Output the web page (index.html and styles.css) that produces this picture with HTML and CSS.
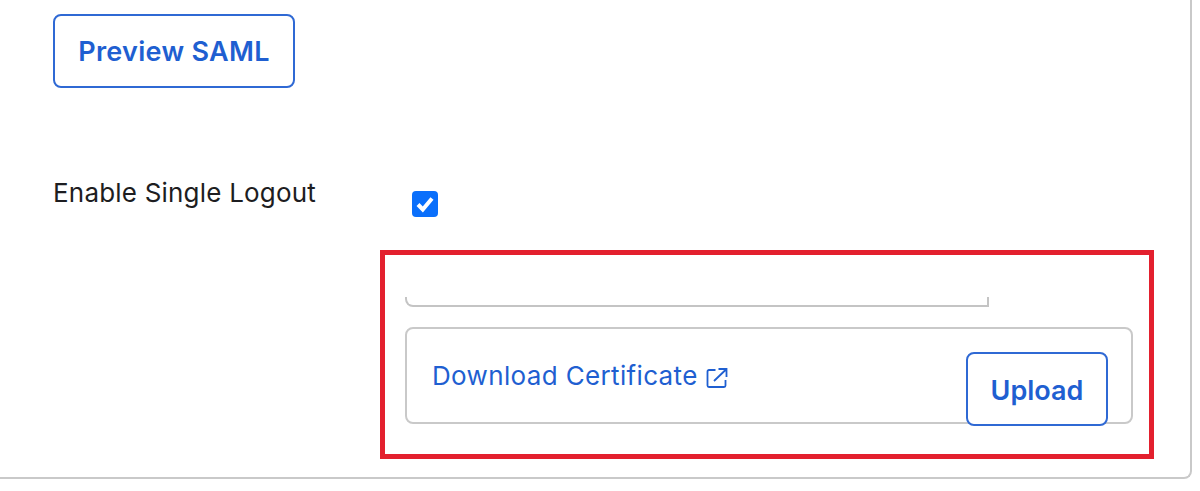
FILE: index.html
```html
<!DOCTYPE html>
<html lang="en">
<head>
    <meta charset="UTF-8">
    <meta name="viewport" content="width=device-width, initial-scale=1.0">
    <title>SAML Settings</title>
    <link rel="stylesheet" href="styles.css">
</head>
<body>
    <div class="settings-card">
        <button class="outline-btn preview-btn">Preview SAML</button>

        <div class="logout-row">
            <span class="field-label">Enable Single Logout</span>
            <span class="check-box">
                <svg width="26" height="26" viewBox="0 0 26 26">
                    <rect width="26" height="26" rx="4" fill="#0a6ffb"/>
                    <path d="M6 13.5l4.8 5L20 7.5" fill="none" stroke="#fff" stroke-width="4"/>
                </svg>
            </span>
        </div>

        <div class="highlight-box">
            <div class="input-end"></div>
            <div class="cert-box">
                <a href="#" class="cert-link">
                    Download Certificate
                    <svg class="link-icon" width="22" height="22" viewBox="0 0 22 22" fill="none" stroke="#1f5fd1" stroke-width="1.8">
                        <path d="M9.5 3H3a1.5 1.5 0 0 0-1.5 1.5v14A1.5 1.5 0 0 0 3 20h15a1.5 1.5 0 0 0 1.5-1.5V13"/>
                        <path d="M8 14L20 2.5M12.5 2h8v8"/>
                    </svg>
                </a>
                <button class="outline-btn upload-btn">Upload</button>
            </div>
        </div>
    </div>
</body>
</html>
```

FILE: styles.css
```css
body {
    font-family: Inter, "Liberation Sans", sans-serif;
    margin: 0;
    background-color: #fff;
    color: #1d1d21;
}

.settings-card {
    box-sizing: border-box;
    width: 1192px;
    height: 479px;
    padding: 14px 0 0 53px;
    border-right: 2px solid #c9c9c9;
    border-bottom: 2px solid #c9c9c9;
    border-bottom-right-radius: 8px;
}

.outline-btn {
    box-sizing: border-box;
    padding: 0;
    background-color: #fff;
    color: #1f5fd1;
    border: 2px solid #2f69d4;
    border-radius: 8px;
    font-family: inherit;
    font-size: 27px;
    font-weight: 600;
    cursor: pointer;
}

.preview-btn {
    display: block;
    width: 242px;
    height: 74px;
    letter-spacing: 0.3px;
}

.logout-row {
    display: flex;
    align-items: flex-start;
    margin-top: 90px;
    height: 72px;
}

.field-label {
    width: 359px;
    font-size: 26px;
    line-height: 30px;
    letter-spacing: 0.2px;
}

.check-box {
    display: block;
    height: 26px;
    margin-top: 13px;
}

.highlight-box {
    box-sizing: border-box;
    width: 774px;
    height: 209px;
    margin-left: 327px;
    padding: 42px 20px 0 20px;
    border: 5px solid #e3202e;
}

.input-end {
    box-sizing: border-box;
    width: 584px;
    height: 10px;
    border-bottom: 2px solid #c4c4c4;
    border-right: 2px solid #c4c4c4;
    border-left: 2px solid #c4c4c4;
    border-bottom-left-radius: 8px;
}

.cert-box {
    box-sizing: border-box;
    display: flex;
    justify-content: space-between;
    align-items: flex-start;
    width: 728px;
    height: 97px;
    margin-top: 20px;
    padding: 23px 23px 0 25px;
    border: 2px solid #c9c9c9;
    border-radius: 8px;
}

.cert-link {
    display: flex;
    align-items: center;
    gap: 8px;
    font-size: 26px;
    line-height: 46px;
    letter-spacing: 0.35px;
    margin-top: 1px;
    color: #1f5fd1;
    text-decoration: none;
}

.link-icon {
    margin-top: 4px;
}

.upload-btn {
    width: 142px;
    height: 74px;
    padding-top: 2px;
}
```
